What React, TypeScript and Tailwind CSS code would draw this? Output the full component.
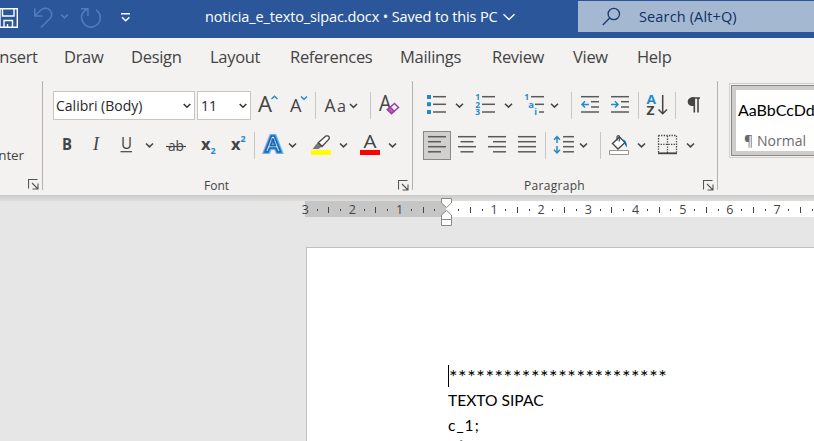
import React from "react";

const INK = "#444444";
const BLUE = "#1e8bcd";

type BoxProps = { x: number; y: number; w: number; h: number; children?: React.ReactNode };

/* Icon drawn on the shared ribbon coordinate grid. */
function Icon({ x, y, w, h, children }: BoxProps) {
  return (
    <svg width={w} height={h} viewBox={`${x} ${y} ${w} ${h}`} fill="none" stroke={INK} strokeWidth="1.5" className="block shrink-0">
      {children}
    </svg>
  );
}

const Top = (p: { x: number; w: number; children?: React.ReactNode }) => <Icon y={91} h={30} {...p} />;
const Low = (p: { x: number; w: number; children?: React.ReactNode }) => <Icon y={131} h={30} {...p} />;

function Chevron({ x, y, color = INK }: { x: number; y: number; color?: string }) {
  return <path d={`M${x} ${y} l3.5 3.4 l3.5 -3.4`} stroke={color} strokeWidth="1.5" />;
}

function Letter({ x, y, s, t, bold, color = INK, len }: { x: number; y: number; s: number; t: string; bold?: boolean; color?: string; len?: number }) {
  return (
    <text x={x} y={y} fontSize={s} fill={color} stroke="none" fontFamily="'Open Sans', sans-serif" fontWeight={bold ? 700 : 400} textLength={len} lengthAdjust="spacingAndGlyphs">
      {t}
    </text>
  );
}

function Launcher() {
  return (
    <svg width="11" height="11" viewBox="0 0 11 11" fill="none" stroke="#555" className="block">
      <path d="M.5 9.5V.5H9.5M4 4l5.5 5.5M10 4.5V10H4.5" strokeWidth="1.1" />
    </svg>
  );
}

const Lines = ({ rows }: { rows: [number, number, number][] }) => (
  <>
    {rows.map(([a, b, y]) => (
      <path key={`${a}-${y}`} d={`M${a} ${y}H${b}`} stroke="#5b5a59" />
    ))}
  </>
);

function TitleBar() {
  return (
    <header className="flex h-[38px] shrink-0 bg-[#2b579a] text-white">
      <svg width="205" height="38" viewBox="0 0 205 38" fill="none" className="shrink-0">
        <path d="M-2 8.7H17.3V27.3H0V8.7M2.5 9V16H14V9M4 27V20.5H12.5V27M7.5 27V24" stroke="#fff" strokeWidth="1.4" />
        <g stroke="#4f7fc0" strokeWidth="1.5">
          <path d="M34.8 8.3V16H42.5M35 15.7L41 10C44 7.3 48 8 50.2 10.6C52.2 13.2 52 16.4 49.8 18.8L41 27.5" />
          <path d="M61 14.5l3.5 3.4l3.5-3.4" />
          <path d="M88 16V8.7H81M87.5 9C82.5 11 80.5 15.5 82 20C83.5 24.8 88 27.8 92.5 27C97.5 26.2 100.5 22 100.3 17.5C100.2 14.5 98.5 11.5 96 9.8" />
        </g>
        <path d="M121 13.7H130M122 17.2l3.7 3.5l3.7-3.5" stroke="#fff" strokeWidth="1.5" />
      </svg>
      <div className="flex w-[373px] items-center pb-[5px]">
        <span className="w-[298px] shrink-0 whitespace-nowrap text-[14.5px] tracking-[-0.13px]">noticia_e_texto_sipac.docx • Saved to this PC</span>
        <svg width="12" height="8" viewBox="0 0 12 8" fill="none" stroke="#fff" strokeWidth="1.3">
          <path d="M.5 1.2L6 6.5L11.5 1.2" />
        </svg>
      </div>
      <div className="mt-px flex h-[31px] grow items-center bg-[#a5b8d1] pl-[24px] text-[#0f2f66]">
        <svg width="37" height="22" viewBox="0 0 37 22" fill="none" stroke="#183a70" strokeWidth="1.3">
          <circle cx="11.8" cy="8" r="5.7" />
          <path d="M7.7 12L.8 19" />
        </svg>
        <span className="whitespace-nowrap text-[14.5px] tracking-[0.14px]">Search (Alt+Q)</span>
      </div>
    </header>
  );
}

function Tabs() {
  return (
    <nav className="-ml-[5px] flex h-[38px] shrink-0 items-center whitespace-nowrap text-[16.5px] tracking-[-0.3px] text-[#444]">
      <span className="w-[69px]">Insert</span>
      <span className="w-[67px]">Draw</span>
      <span className="w-[79px]">Design</span>
      <span className="w-[80px]">Layout</span>
      <span className="w-[110px]">References</span>
      <span className="w-[92px]">Mailings</span>
      <span className="w-[81px]">Review</span>
      <span className="w-[64px]">View</span>
      <span>Help</span>
    </nav>
  );
}

function Combo({ text, wide }: { text: string; wide?: boolean }) {
  return (
    <div className={`flex h-[29px] shrink-0 items-center justify-between border border-[#c8c6c4] bg-white text-[14px] text-[#262626] ${wide ? "mr-[2px] w-[142px] pl-[2px] pr-[3px]" : "w-[54px] pl-[3px] pr-[3px]"}`}>
      <span className="whitespace-nowrap">{text}</span>
      <svg width="8" height="6" viewBox="0 0 8 6" fill="none" stroke="#333" strokeWidth="1.5">
        <path d="M.7 1l3.3 3.3L7.3 1" />
      </svg>
    </div>
  );
}

function FontGroup() {
  return (
    <section className="flex h-[109px] w-[370px] shrink-0 flex-col border-r border-[#b3b0ad]">
      <div className="flex h-[40px] pl-[10px] pt-[10px]">
        <Combo text="Calibri (Body)" wide />
        <Combo text="11" />
        <Top x={251} w={34}>
          <Letter x={258} y={111.5} s={22} t="A" len={14} />
          <path d="M271.5 99l3-2.7l3 2.7" stroke={BLUE} />
        </Top>
        <Top x={285} w={34}>
          <Letter x={290} y={111.5} s={17.5} t="A" len={11.5} />
          <path d="M301 96.5l3 2.7l3-2.7" stroke={BLUE} />
          <path d="M315.5 92V119" stroke="#c8c6c4" strokeWidth="1" />
        </Top>
        <Top x={319} w={56}>
          <Letter x={324.5} y={111.5} s={17.5} t="A" len={11} />
          <Letter x={337} y={111.5} s={17} t="a" len={9} />
          <Chevron x={350} y={104} />
          <path d="M370.5 92V119" stroke="#c8c6c4" strokeWidth="1" />
        </Top>
        <Top x={375} w={30}>
          <Letter x={379} y={110.5} s={21} t="A" len={12.5} />
          <path d="M387.5 109.5L394.5 103.5L398.5 107.5L391.5 113.5Z" fill="#f3f2f1" stroke="#9b3fa5" />
          <path d="M387.5 109.5L390.2 107.2L394.2 111.2L391.5 113.5Z" fill="#b565bd" stroke="#9b3fa5" />
        </Top>
      </div>
      <div className="flex h-[40px] pl-[10px] pt-[10px]">
        <Low x={53} w={30}><Letter x={62} y={150} s={16.5} t="B" bold len={10} /></Low>
        <Low x={83} w={30}>
          <text x="93" y="150" fontSize="18" fontStyle="italic" fill={INK} stroke="none" fontFamily="'Liberation Serif', serif">I</text>
        </Low>
        <Low x={113} w={47}>
          <Letter x={121} y={148.5} s={16.5} t="U" len={11} />
          <path d="M120.5 151.7H132" strokeWidth="1.2" />
          <Chevron x={146} y={143.5} />
        </Low>
        <Low x={160} w={34}>
          <Letter x={168} y={151} s={15} t="ab" len={16} />
          <path d="M166 146.5H186" strokeWidth="1.2" />
        </Low>
        <Low x={194} w={30}>
          <Letter x={201} y={150} s={16} t="x" bold len={9.5} />
          <Letter x={210.5} y={154} s={9} t="2" bold color={BLUE} />
        </Low>
        <Low x={224} w={35}>
          <Letter x={231} y={150} s={16} t="x" bold len={9.5} />
          <Letter x={240.5} y={142} s={9} t="2" bold color={BLUE} />
          <path d="M254.5 132V159" stroke="#c8c6c4" strokeWidth="1" />
        </Low>
        <Low x={259} w={47}>
          <text x="265" y="152" fontSize="21" fontWeight="600" fill="none" stroke="#6cb2ea" strokeWidth="4" textLength="15.5" lengthAdjust="spacingAndGlyphs" fontFamily="'Open Sans', sans-serif">A</text>
          <text x="265" y="152" fontSize="21" fontWeight="600" fill="#fff" stroke="#1467b3" strokeWidth="1.6" textLength="15.5" lengthAdjust="spacingAndGlyphs" fontFamily="'Open Sans', sans-serif">A</text>
          <Chevron x={289} y={143.5} />
        </Low>
        <Low x={306} w={49}>
          <path d="M311 150H331V155H311Z" fill="#ffff00" stroke="none" />
          <path d="M312.5 149L318 142L322 146.5L318.5 149Z" fill="#777" stroke="none" />
          <path d="M318.5 142.5L325.5 136.2Q328.5 135 329.3 137.5Q329.5 138.6 328.5 139.6L322 146.5Z" fill="#fff" strokeWidth="1.3" />
          <Chevron x={340} y={143.5} />
        </Low>
        <Low x={355} w={47}>
          <Letter x={363.5} y={148} s={18.5} t="A" len={13} />
          <path d="M360 150H380V155H360Z" fill="#ff0000" stroke="none" />
          <Chevron x={389} y={143.5} />
        </Low>
      </div>
      <div className="mt-[14px] flex items-center justify-between pl-[161px] pr-[3px] pt-px text-[12px] leading-[19px] text-[#444]">
        <span>Font</span>
        <Launcher />
      </div>
    </section>
  );
}

function ParagraphGroup() {
  return (
    <section className="flex h-[109px] w-[305px] shrink-0 flex-col border-r border-[#b3b0ad]">
      <div className="flex h-[40px] pl-[10px] pt-[10px]">
        <Top x={423} w={47}>
          <path d="M427 95h4v4h-4zM427 102.3h4v4h-4zM427 110h4v4h-4z" fill={BLUE} stroke="none" />
          <Lines rows={[[433, 446, 96.7], [433, 446, 104.3], [433, 446, 112]]} />
          <Chevron x={456} y={103.7} />
        </Top>
        <Top x={470} w={50}>
          {["1", "2", "3"].map((n, i) => <Letter key={n} x={475.3} y={100 + i * 7.6} s={8.5} t={n} bold color={BLUE} />)}
          <Lines rows={[[482, 495, 96.7], [482, 495, 104.3], [482, 495, 112]]} />
          <Chevron x={505} y={103.7} />
        </Top>
        <Top x={520} w={56}>
          <Letter x={524.3} y={100} s={8.5} t="1" bold color={BLUE} />
          <Letter x={528.3} y={107.5} s={9.5} t="a" bold color={BLUE} />
          <Letter x={534.3} y={115} s={9} t="i" bold color={BLUE} />
          <Lines rows={[[531, 544, 96.7], [535, 544, 104.3], [539, 544, 112]]} />
          <Chevron x={551} y={103.7} />
          <path d="M571.5 92V119" stroke="#c8c6c4" strokeWidth="1" />
        </Top>
        <Top x={576} w={30}>
          <Lines rows={[[581, 599, 96.7], [591, 599, 101.7], [591, 599, 107], [581, 599, 112]]} />
          <path d="M589 104.4H582M585 101.3L582 104.4L585 107.5" stroke={BLUE} />
        </Top>
        <Top x={606} w={37}>
          <Lines rows={[[611, 629, 96.7], [621, 629, 101.7], [621, 629, 107], [611, 629, 112]]} />
          <path d="M611 104.4H618M615 101.3L618 104.4L615 107.5" stroke={BLUE} />
          <path d="M638.5 92V119" stroke="#c8c6c4" strokeWidth="1" />
        </Top>
        <Top x={643} w={37}>
          <Letter x={646.5} y={103.7} s={12} t="A" bold color={BLUE} len={9.5} />
          <Letter x={646.5} y={115} s={12} t="Z" bold len={8} />
          <path d="M662.7 95V113.5M658.5 109.5L662.7 113.7L667 109.5" />
          <path d="M675.5 92V119" stroke="#c8c6c4" strokeWidth="1" />
        </Top>
        <Top x={680} w={28}>
          <path d="M695 97.5H692.5C689.3 97.5 687.7 99.3 687.7 101.8C687.7 104.3 689.3 106 692.5 106H695Z" fill={INK} stroke="none" />
          <path d="M691 98H700M694.3 98V112.5M698 98V112.5" strokeWidth="1.6" />
        </Top>
      </div>
      <div className="flex h-[40px] pl-[10px] pt-[10px]">
        <div className="h-[29px] w-[28px] shrink-0 bg-[#d2d0ce] outline outline-1 -outline-offset-1 outline-[#8a8886]">
          <Low x={423} w={28}><Lines rows={[[428, 446, 136.7], [428, 441, 141.7], [428, 446, 146.7], [428, 441, 151.8]]} /></Low>
        </div>
        <Low x={451} w={31}><Lines rows={[[458, 476, 136.7], [460.5, 473.5, 141.7], [458, 476, 146.7], [460.5, 473.5, 151.8]]} /></Low>
        <Low x={482} w={30}><Lines rows={[[488, 506, 136.7], [493, 506, 141.7], [488, 506, 146.7], [493, 506, 151.8]]} /></Low>
        <Low x={512} w={38}>
          <Lines rows={[[518, 536, 136.7], [518, 536, 141.7], [518, 536, 146.7], [518, 536, 151.8]]} />
          <path d="M545.5 132V159" stroke="#c8c6c4" strokeWidth="1" />
        </Low>
        <Low x={550} w={55}>
          <path d="M557 143V137M554 139.8L557 136.7L560 139.8M557 146V152.5M554 149.8L557 152.9L560 149.8" stroke={BLUE} />
          <Lines rows={[[563, 574, 136.7], [563, 574, 141.7], [563, 574, 146.7], [563, 574, 151.8]]} />
          <Chevron x={580} y={143.5} />
          <path d="M600.5 132V159" stroke="#c8c6c4" strokeWidth="1" />
        </Low>
        <Low x={605} w={48}>
          <path d="M612.5 143.5L619.5 137L625 142.5L618 149Z" fill="#fff" strokeWidth="1.3" />
          <path d="M617 140.5V137Q617.5 135 619.3 136V141.5" strokeWidth="1.2" />
          <path d="M622 139.5Q627 139.5 627 147.5Q624.5 145 624 142Z" fill="#1467b3" stroke="none" />
          <path d="M609.5 150.5H628.5V154.5H609.5Z" fill="#fff" stroke="#979593" strokeWidth="1" />
          <Chevron x={638} y={143.5} />
        </Low>
        <Low x={653} w={48}>
          <path d="M658.5 135.5H676.5V153M658.5 135.5V153M667.5 136V153M658 144.3H677" strokeWidth="1.3" strokeDasharray="1.3 1.3" />
          <path d="M658 153.3H677" strokeWidth="1.8" />
          <Chevron x={687} y={143.5} />
        </Low>
      </div>
      <div className="mt-[14px] flex items-center justify-between pl-[111px] pr-[3px] pt-px text-[12px] leading-[19px] text-[#444]">
        <span className="tracking-[0.3px]">Paragraph</span>
        <Launcher />
      </div>
    </section>
  );
}

function Ribbon() {
  return (
    <div className="flex h-[119px] shrink-0 items-start">
      <section className="mt-[5px] flex h-[109px] w-[43px] shrink-0 flex-col items-end justify-end overflow-hidden border-r border-[#b3b0ad] pr-[3px]">
        <span className="mb-[14px] mr-[15px] whitespace-nowrap text-[13.5px] leading-[20px] tracking-[-0.1px] text-[#444]">Format Painter</span>
        <Launcher />
      </section>
      <div className="mt-[5px] flex h-[109px]">
        <FontGroup />
        <ParagraphGroup />
      </div>
      <section className="ml-[11px] mt-[7px] h-[75px] w-[100px] shrink-0 border border-[#d2d0ce] p-px">
        <div className="h-full border border-[#8a8886] bg-[#cfcdcb] p-[4px]">
          <div className="flex h-full flex-col overflow-hidden whitespace-nowrap bg-white">
            <span className="pl-[2px] pt-[9px] font-['Lato','Open_Sans',sans-serif] text-[16px] leading-[22px] text-black">AaBbCcDd</span>
            <span className="pl-[8px] pt-[10px] text-[14px] leading-[20px] tracking-[0.05px] text-[#6b6b6b]">¶ Normal</span>
          </div>
        </div>
      </section>
    </div>
  );
}

function Ruler() {
  const steps = Array.from({ length: 44 }, (_, i) => i);
  return (
    <div className="relative ml-[305px] h-[16px] shrink-0 bg-white">
      <div className="flex h-full w-[141px] bg-[#c6c6c6]">
        <div className="-ml-[5.7px] flex h-full shrink-0 items-center text-[12.5px] leading-[16px] text-[#444]">
          {steps.map((i) => {
            const n = Math.abs(i / 4 - 3);
            return (
              <span key={i} className="flex w-[11.8px] shrink-0 items-center justify-center pt-px">
                {i === 12 ? null : i % 4 === 0 ? n : i % 2 === 0 ? <i className="h-[6px] w-px bg-[#444]" /> : <i className="h-[2px] w-px bg-[#444]" />}
              </span>
            );
          })}
        </div>
      </div>
      <svg width="12" height="29" viewBox="0 0 12 29" fill="#fff" stroke="#8a8886" className="absolute -top-[3px] left-[136px]">
        <path d="M.5.5H10.5V5L5.5 9.5L.5 5Z" />
        <path d="M5.5 12.5L10.5 17V21.5H.5V17Z" />
        <path d="M.5 21.5H10.5V27.5H.5Z" />
      </svg>
    </div>
  );
}

function Page() {
  return (
    <main className="ml-[306px] mt-[30px] flex h-[220px] shrink-0 flex-col whitespace-nowrap border-l border-t border-[#c0c0c0] bg-white pl-[141px] pt-[116px] font-['Lato','Open_Sans',sans-serif] text-[15.6px] leading-[25px] text-black">
      <div className="flex h-[24px]">
        <i className="mt-px h-[22px] w-px shrink-0 bg-black" />
        <span className="text-[20px] leading-[24px] tracking-[0.6px]">************************</span>
      </div>
      <p>TEXTO SIPAC</p>
      <p className="tracking-[1px]">c_1;</p>
      <p className="leading-[23px]">TÍTULO</p>
    </main>
  );
}

export default function App() {
  return (
    <div className="flex h-[441px] w-[814px] flex-col overflow-hidden bg-[#e6e6e6] font-['Open_Sans','Noto_Sans',sans-serif]">
      <TitleBar />
      <div className="flex h-[157px] shrink-0 flex-col bg-[#f3f2f1]">
        <Tabs />
        <Ribbon />
      </div>
      <div className="h-[6px] shrink-0 bg-gradient-to-b from-[#cccbca] to-[#dedede]" />
      <Ruler />
      <Page />
    </div>
  );
}
